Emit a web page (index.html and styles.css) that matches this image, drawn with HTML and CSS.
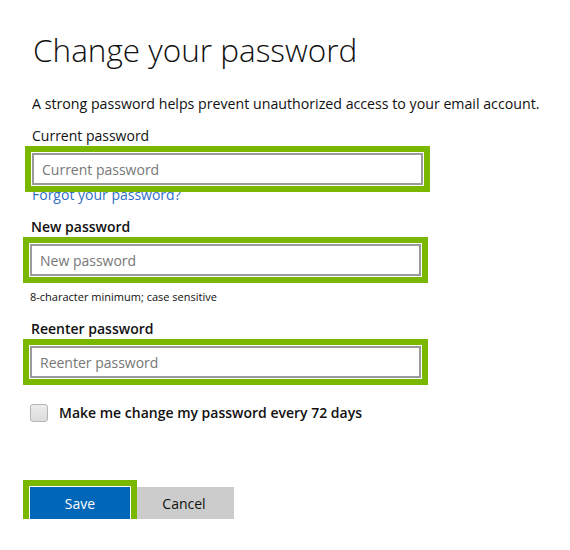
FILE: index.html
```html
<!DOCTYPE html>
<html lang="en">
<head>
<meta charset="utf-8">
<title>Change your password</title>
<link rel="stylesheet" href="styles.css">
</head>
<body>
<main class="page">
  <h1 class="title">Change your password</h1>
  <p class="intro">A strong password helps prevent unauthorized access to your email account.</p>

  <div class="field field--current">
    <label class="label" for="cur">Current password</label>
    <div class="highlight">
      <input class="input" id="cur" type="password" placeholder="Current password">
    </div>
    <a class="link" href="#">Forgot your password?</a>
  </div>

  <div class="field field--new">
    <label class="label label--strong" for="new">New password</label>
    <div class="highlight">
      <input class="input" id="new" type="password" placeholder="New password">
    </div>
    <p class="hint">8-character minimum; case sensitive</p>
  </div>

  <div class="field field--re">
    <label class="label label--strong" for="re">Reenter password</label>
    <div class="highlight">
      <input class="input" id="re" type="password" placeholder="Reenter password">
    </div>
  </div>

  <label class="check">
    <span class="check__box"></span>
    <span class="check__text">Make me change my password every 72 days</span>
  </label>

  <div class="actions">
    <div class="highlight highlight--btn">
      <button class="btn btn--primary" type="button">Save</button>
    </div>
    <button class="btn btn--secondary" type="button">Cancel</button>
  </div>
</main>
</body>
</html>
```

FILE: styles.css
```css
* { box-sizing: border-box; }

html, body {
  margin: 0;
  padding: 0;
  background: #ffffff;
}

body {
  font-family: "Open Sans", "Noto Sans", "DejaVu Sans", sans-serif;
  color: #111;
}

.page {
  padding: 30px 0 0 30px;
  display: flex;
  flex-direction: column;
  align-items: flex-start;
}

.title {
  margin: 0 0 0 3px;
  font-size: 31.5px;
  font-weight: 300;
  line-height: 40px;
  color: #111;
}

.intro {
  margin: 24px 0 0 2px;
  font-size: 14.2px;
  line-height: 20px;
}

.field {
  display: flex;
  flex-direction: column;
  align-items: flex-start;
}

.field--current { margin: 12px 0 0 2px; }
.field--new { margin-top: 12px; }
.field--re { margin-top: 14px; }

.label {
  display: block;
  font-size: 14px;
  line-height: 20px;
  margin-bottom: 7px;
}

.label--strong { font-weight: 600; margin-left: 1px; }

.highlight {
  position: relative;
}

.highlight::after {
  content: "";
  position: absolute;
  inset: -7px;
  border: 6px solid #7ab800;
  pointer-events: none;
  z-index: 1;
}

.input {
  display: block;
  width: 391px;
  height: 32px;
  margin: 0;
  padding: 0 8px;
  border: 2px solid #9a9a9a;
  background: #fff;
  font-family: inherit;
  font-size: 14px;
  color: #222;
  outline: none;
}

.input::placeholder { color: #777; }

.link {
  font-size: 14px;
  line-height: 20px;
  color: #2f6fc7;
  text-decoration: none;
}

.hint {
  margin: 13px 0 0 0;
  font-size: 11px;
  line-height: 16px;
}

.check {
  display: flex;
  align-items: center;
  gap: 11px;
  margin-top: 25px;
}

.check__box {
  width: 18px;
  height: 18px;
  border: 1px solid #b5b5b5;
  border-radius: 3px;
  background: linear-gradient(#ececec, #dcdcdc);
}

.check__text {
  font-size: 14px;
  font-weight: 600;
  line-height: 20px;
}

.actions {
  display: flex;
  gap: 4px;
  margin-top: 64px;
}

.btn {
  width: 100px;
  height: 32px;
  border: 0;
  margin: 0;
  padding: 0;
  font-family: inherit;
  font-size: 14px;
}

.btn--primary {
  display: block;
  background: #0067b8;
  color: #fff;
}

.btn--secondary {
  background: #cccccc;
  color: #111;
}
```
